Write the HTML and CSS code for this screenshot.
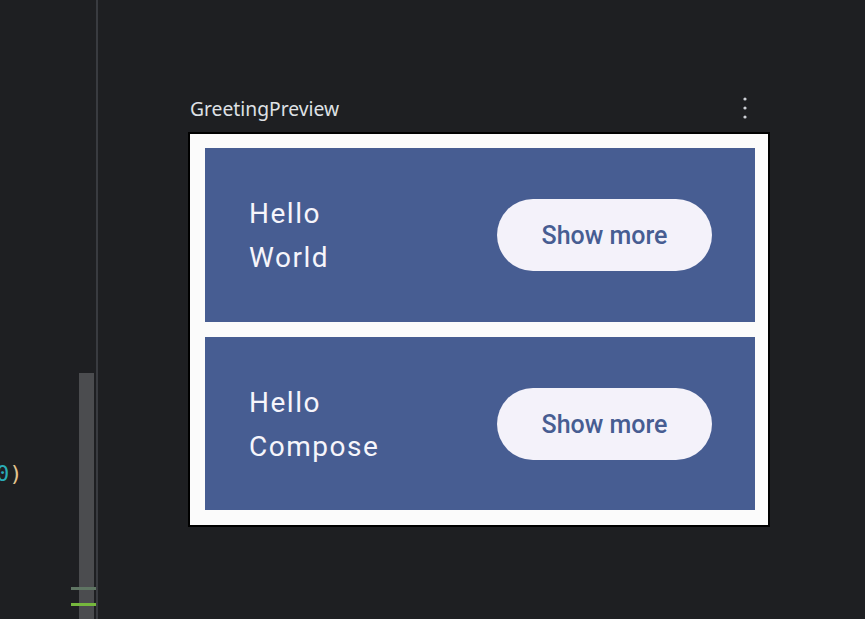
FILE: index.html
```html
<!DOCTYPE html>
<html>
<head>
<meta charset="utf-8">
<link rel="stylesheet" href="styles.css">
</head>
<body>
<div class="ide">
  <div class="editor">
    <div class="code">
      <div class="code-line"><span class="num">0</span><span class="paren">)</span></div>
    </div>
    <div class="thumb"></div>
    <div class="marker marker-gray"></div>
    <div class="marker marker-green"></div>
  </div>
  <div class="divider"></div>
  <div class="preview-pane">
    <div class="preview-head">
      <span class="preview-title">GreetingPreview</span>
      <svg class="kebab" width="6" height="24" viewBox="0 0 6 24">
        <circle cx="3" cy="3" r="1.6" fill="#ced0d6"/>
        <circle cx="3" cy="12" r="1.6" fill="#ced0d6"/>
        <circle cx="3" cy="21" r="1.6" fill="#ced0d6"/>
      </svg>
    </div>
    <div class="frame">
      <div class="card card-first">
        <div class="greeting">
          <div>Hello</div>
          <div>World</div>
        </div>
        <div class="btn">Show more</div>
      </div>
      <div class="card card-second">
        <div class="greeting">
          <div>Hello</div>
          <div>Compose</div>
        </div>
        <div class="btn">Show more</div>
      </div>
    </div>
  </div>
</div>
</body>
</html>
```

FILE: styles.css
```css
html, body {
  margin: 0;
  padding: 0;
  background: #1e1f22;
  width: 865px;
  height: 619px;
  overflow: hidden;
}
.ide {
  display: flex;
  height: 619px;
}
.editor {
  position: relative;
  width: 96px;
  flex: none;
  overflow: hidden;
}
.code {
  padding-top: 460px;
  margin-left: -4px;
}
.code-line {
  font-family: "DejaVu Sans Mono", monospace;
  font-size: 22px;
  line-height: 28px;
}
.num { color: #2aacb8; }
.paren { color: #e3c48f; }
.thumb {
  position: absolute;
  left: 79px;
  top: 373px;
  width: 15px;
  bottom: 0;
  background: #4b4c4f;
}
.marker {
  position: absolute;
  left: 71px;
  width: 25px;
  height: 3px;
}
.marker-gray { top: 587px; background: #5f7563; }
.marker-green { top: 603px; background: #76b83d; }
.divider {
  width: 2px;
  flex: none;
  background: #393b40;
}
.preview-pane {
  padding: 96px 0 0 90px;
  flex: 1;
}
.preview-head {
  width: 582px;
  height: 24px;
  display: flex;
  align-items: center;
  justify-content: space-between;
  padding-right: 22px;
  box-sizing: border-box;
  margin-bottom: 12px;
}
.preview-title {
  font-family: "Noto Sans", sans-serif;
  font-size: 19.3px;
  color: #dfe1e5;
  padding-left: 2px;
}
.kebab { display: block; }
.frame {
  border: 2px solid #000;
  background: #fbfbfb;
  padding: 14px 13px 15px 15px;
  display: flex;
  flex-direction: column;
  gap: 15px;
  width: 550px;
}
.card {
  background: #475d92;
  display: flex;
  align-items: center;
  justify-content: space-between;
  padding: 0 43px 0 44px;
}
.card-first { height: 174px; }
.card-second { height: 173px; }
.greeting {
  font-family: Roboto, sans-serif;
  font-size: 28px;
  line-height: 44px;
  color: #f6f5fb;
  letter-spacing: 1.5px;
  padding-top: 2px;
}
.btn {
  width: 215px;
  height: 72px;
  border-radius: 36px;
  background: #f4f2fa;
  color: #475d92;
  font-family: Roboto, sans-serif;
  font-weight: 500;
  font-size: 25px;
  display: flex;
  align-items: center;
  justify-content: center;
  padding-top: 1px;
  box-sizing: border-box;
}
```
